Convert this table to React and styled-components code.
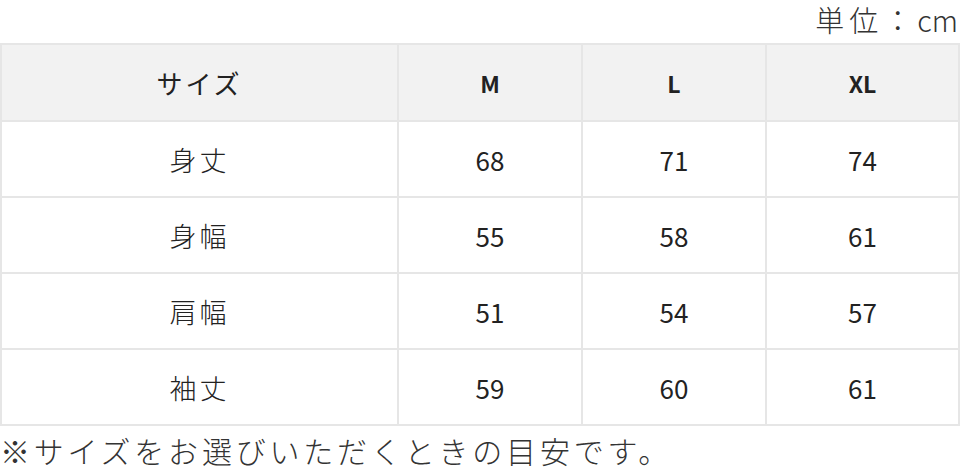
import styled, { createGlobalStyle } from "styled-components";

const GlobalStyle = createGlobalStyle`
  html, body { margin: 0; padding: 0; background: #ffffff; }
  body { font-family: "Noto Sans CJK JP", "Noto Sans", sans-serif; color: #222; }
`;

const sizes = ["M", "L", "XL"];

const rows = [
  { name: "身丈", values: [68, 71, 74] },
  { name: "身幅", values: [55, 58, 61] },
  { name: "肩幅", values: [51, 54, 57] },
  { name: "袖丈", values: [59, 60, 61] },
];

export default function App() {
  return (
    <>
      <GlobalStyle />
      <Wrap>
        <Unit>
          <Spaced>単位：</Spaced>cm
        </Unit>
        <Table>
          <colgroup>
            <col style={{ width: 397 }} />
            <col style={{ width: 184 }} />
            <col style={{ width: 184 }} />
            <col />
          </colgroup>
          <thead>
            <tr>
              <Head>サイズ</Head>
              {sizes.map((s) => (
                <Head key={s} $latin>{s}</Head>
              ))}
            </tr>
          </thead>
          <tbody>
            {rows.map((r) => (
              <tr key={r.name}>
                <Cell>{r.name}</Cell>
                {r.values.map((v, i) => (
                  <Cell key={i} $num>{v}</Cell>
                ))}
              </tr>
            ))}
          </tbody>
        </Table>
        <Note>※サイズをお選びいただくときの目安です。</Note>
      </Wrap>
    </>
  );
}

const Wrap = styled.div`
  width: 960px;
  display: flex;
  flex-direction: column;
`;

const Unit = styled.p`
  margin: 0;
  height: 43px;
  text-align: right;
  font-size: 29px;
  line-height: 38px;
  font-weight: 300;
  color: #333;
  padding-right: 2px;
`;

const Spaced = styled.span`
  letter-spacing: 5px;
`;

const Table = styled.table`
  width: 960px;
  border-collapse: collapse;
  table-layout: fixed;
`;

const Head = styled.th`
  height: 75px;
  padding: 0;
  background: #f2f2f2;
  border: 2px solid #e6e6e6;
  text-align: center;
  font-size: ${(p) => (p.$latin ? "23px" : "26px")};
  font-weight: ${(p) => (p.$latin ? 700 : 400)};
  letter-spacing: ${(p) => (p.$latin ? "0" : "3px")};
  color: #222;
`;

const Cell = styled.td`
  height: 74px;
  padding: 0;
  border: 2px solid #e6e6e6;
  text-align: center;
  font-size: ${(p) => (p.$num ? "26px" : "27px")};
  font-weight: ${(p) => (p.$num ? 400 : 300)};
  letter-spacing: ${(p) => (p.$num ? "0" : "3px")};
  color: #222;
`;

const Note = styled.p`
  margin: 0;
  padding-top: 5px;
  font-size: 30px;
  line-height: 38px;
  font-weight: 300;
  letter-spacing: 3.8px;
  color: #333;
  white-space: nowrap;
`;
